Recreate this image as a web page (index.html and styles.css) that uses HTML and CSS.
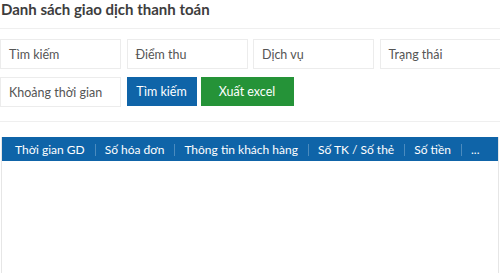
FILE: index.html
```html
<!DOCTYPE html>
<html lang="vi">
<head>
<meta charset="utf-8">
<link rel="stylesheet" href="styles.css">
</head>
<body>
<div class="page">
  <h1 class="title">Danh sách giao dịch thanh toán</h1>
  <div class="divider"></div>
  <div class="filters">
    <div class="field">Tìm kiếm</div>
    <div class="field">Điểm thu</div>
    <div class="field">Dịch vụ</div>
    <div class="field">Trạng thái</div>
    <div class="field">Khoảng thời gian</div>
    <div class="actions">
      <button class="btn btn-blue">Tìm kiếm</button>
      <button class="btn btn-green">Xuất excel</button>
    </div>
  </div>
  <div class="divider divider-2"></div>
  <div class="table">
    <div class="thead">
      <div class="th">Thời gian GD</div>
      <div class="th">Số hóa đơn</div>
      <div class="th">Thông tin khách hàng</div>
      <div class="th">Số TK / Số thẻ</div>
      <div class="th">Số tiền</div>
      <div class="th">...</div>
    </div>
    <div class="tbody"></div>
  </div>
</div>
</body>
</html>
```
FILE: styles.css
```css
* { box-sizing: border-box; }
html, body { margin: 0; padding: 0; background: #fff; }
body { font-family: Lato, "Open Sans", sans-serif; color: #444; }
.page { width: 500px; height: 273px; overflow: hidden; }
.title {
  margin: 0;
  padding: 0 0 0 1px;
  font-size: 15px;
  font-weight: 700;
  line-height: 19px;
  color: #3d3d3d;
}
.divider { height: 1px; background: #efefef; margin: 9px 0 10px; }
.divider-2 { margin: 14px 0 15px; }
.filters {
  display: grid;
  grid-template-columns: repeat(4, 121px);
  column-gap: 5.5px;
  row-gap: 8px;
}
.field {
  height: 30px;
  border: 1px solid #ececec;
  padding: 0 8px;
  display: flex;
  align-items: center;
  font-size: 12.5px;
  color: #555;
}
.actions { grid-column: span 2; display: flex; gap: 4px; }
.btn {
  height: 29px;
  border: 0;
  color: #fff;
  font-family: inherit;
  font-size: 12.5px;
  padding: 0;
}
.btn-blue { width: 70px; background: #0f64a8; }
.btn-green { width: 93px; background: #259338; }
.table {
  border-left: 1px solid #e6e6e6;
  border-right: 1px solid #e6e6e6;
  margin-left: 1px;
  width: 498px;
  height: 140px;
}
.thead {
  display: flex;
  align-items: center;
  height: 24px;
  background: #0f64a8;
  padding-left: 3px;
}
.th {
  color: #fff;
  font-size: 12px;
  padding: 0 10px;
  position: relative;
  white-space: nowrap;
}
.th + .th::before {
  content: "";
  position: absolute;
  left: 0;
  top: 2px;
  bottom: 1px;
  width: 1px;
  background: rgba(255,255,255,0.25);
}
```
